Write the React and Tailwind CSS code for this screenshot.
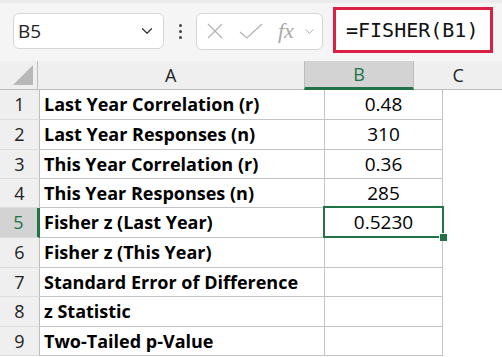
import { ChevronDown } from 'lucide-react';

const ROWS = [
  { n: 1, label: 'Last Year Correlation (r)', value: '0.48', h: 'h-[30px]' },
  { n: 2, label: 'Last Year Responses (n)', value: '310', h: 'h-[30px]' },
  { n: 3, label: 'This Year Correlation (r)', value: '0.36', h: 'h-[29px]' },
  { n: 4, label: 'This Year Responses (n)', value: '285', h: 'h-[29px]' },
  { n: 5, label: 'Fisher z (Last Year)', value: '0.5230', h: 'h-[30px]', active: true },
  { n: 6, label: 'Fisher z (This Year)', value: '', h: 'h-[30px]' },
  { n: 7, label: 'Standard Error of Difference', value: '', h: 'h-[29px]' },
  { n: 8, label: 'z Statistic', value: '', h: 'h-[30px]' },
  { n: 9, label: 'Two-Tailed p-Value', value: '', h: 'h-[29px]' },
];

const cellFont = { fontFamily: '"Open Sans", "Noto Sans", sans-serif' };

export default function App() {
  return (
    <div className="w-[502px] h-[357px] overflow-hidden bg-white" style={cellFont}>
      {/* Formula bar */}
      <div className="h-[61px] bg-[#f5f5f5] border-t-[3px] border-[#ebebeb] flex items-center pl-[13px]">
        <div className="w-[151px] h-[36px] bg-white border border-[#d6d6d6] rounded-[6px] flex items-center justify-between pl-[4px] pr-[7px] mt-[-2px]">
          <span className="text-[19px] text-[#222]">B5</span>
          <ChevronDown size={18} strokeWidth={1.6} className="text-[#333]" />
        </div>
        <div className="w-[32px] flex flex-col items-center gap-[3px] mt-[-2px]">
          <span className="w-[3px] h-[3px] rounded-full bg-[#444]" />
          <span className="w-[3px] h-[3px] rounded-full bg-[#444]" />
          <span className="w-[3px] h-[3px] rounded-full bg-[#444]" />
        </div>
        <div className="w-[127px] h-[37px] bg-white border border-[#d6d6d6] rounded-[6px] flex items-center pl-[10px] mt-[-2px]">
          <svg width="16" height="16" viewBox="0 0 16 16" fill="none" stroke="#b3b3b3" strokeWidth="1.3">
            <path d="M1 1L15 15M15 1L1 15" />
          </svg>
          <svg width="24" height="16" viewBox="0 0 24 16" fill="none" stroke="#b3b3b3" strokeWidth="1.3" className="ml-[16px]">
            <path d="M1 9L8 15L23 1" />
          </svg>
          <span className="ml-[15px] text-[22px] italic text-[#a8a8a8] leading-none" style={{ fontFamily: '"Liberation Serif", serif' }}>fx</span>
          <ChevronDown size={15} strokeWidth={1.5} className="text-[#aaa] ml-[8px]" />
        </div>
        <div className="ml-[10px] w-[160px] h-[46px] bg-white border-[3px] border-[#dc1f45] flex items-center pl-[10px] mt-[-4px]">
          <span className="text-[20px] text-[#111]" style={{ fontFamily: '"DejaVu Sans Mono", "Liberation Mono", monospace' }}>=FISHER(B1)</span>
        </div>
      </div>

      {/* Column headers */}
      <div className="flex h-[29px] bg-[#efefef] border-b border-[#bdbdbd] text-[18px] text-[#222]">
        <div className="w-[40px] border-r border-[#bdbdbd] flex items-end justify-end pr-[4px] pb-[4px]">
          <svg width="20" height="20" viewBox="0 0 20 20">
            <path d="M20 0L20 20L0 20Z" fill="#b8b8b8" />
          </svg>
        </div>
        <div className="w-[285px] flex items-center justify-center">A</div>
        <div className="w-[118px] bg-[#d3d3d3] border-x border-[#bdbdbd] flex items-center justify-center text-[#217346] border-b-[3px] border-b-[#217346] mb-[-1px]">B</div>
        <div className="w-[94px] flex items-center justify-center">C</div>
      </div>

      {/* Rows */}
      {ROWS.map((r) => (
        <div key={r.n} className={`flex ${r.h}`}>
          <div
            className={`w-[40px] flex items-center justify-center text-[18px] border-b border-[#dcdcdc] ${
              r.active
                ? 'bg-[#d3d3d3] text-[#217346] border-r-[3px] border-r-[#217346]'
                : 'bg-[#efefef] text-[#222] border-r border-r-[#bdbdbd]'
            }`}
          >
            {r.n}
          </div>
          <div className="w-[285px] border-r border-b border-[#c4c4c4] flex items-center pl-[4px] text-[18px] font-bold text-black whitespace-nowrap overflow-hidden">
            {r.label}
          </div>
          <div className="w-[118px] border-r border-b border-[#c4c4c4] flex items-center justify-center text-[19px] text-black relative">
            {r.value}
            {r.active && (
              <>
                <span className="absolute left-[-2px] top-[-2px] right-[-2px] bottom-[-1px] border-2 border-[#217346]" />
                <span className="absolute right-[-5px] bottom-[-4px] w-[8px] h-[8px] bg-[#217346] border-l border-t border-white z-10" />
              </>
            )}
          </div>
          <div className="flex-1" />
        </div>
      ))}
    </div>
  );
}
